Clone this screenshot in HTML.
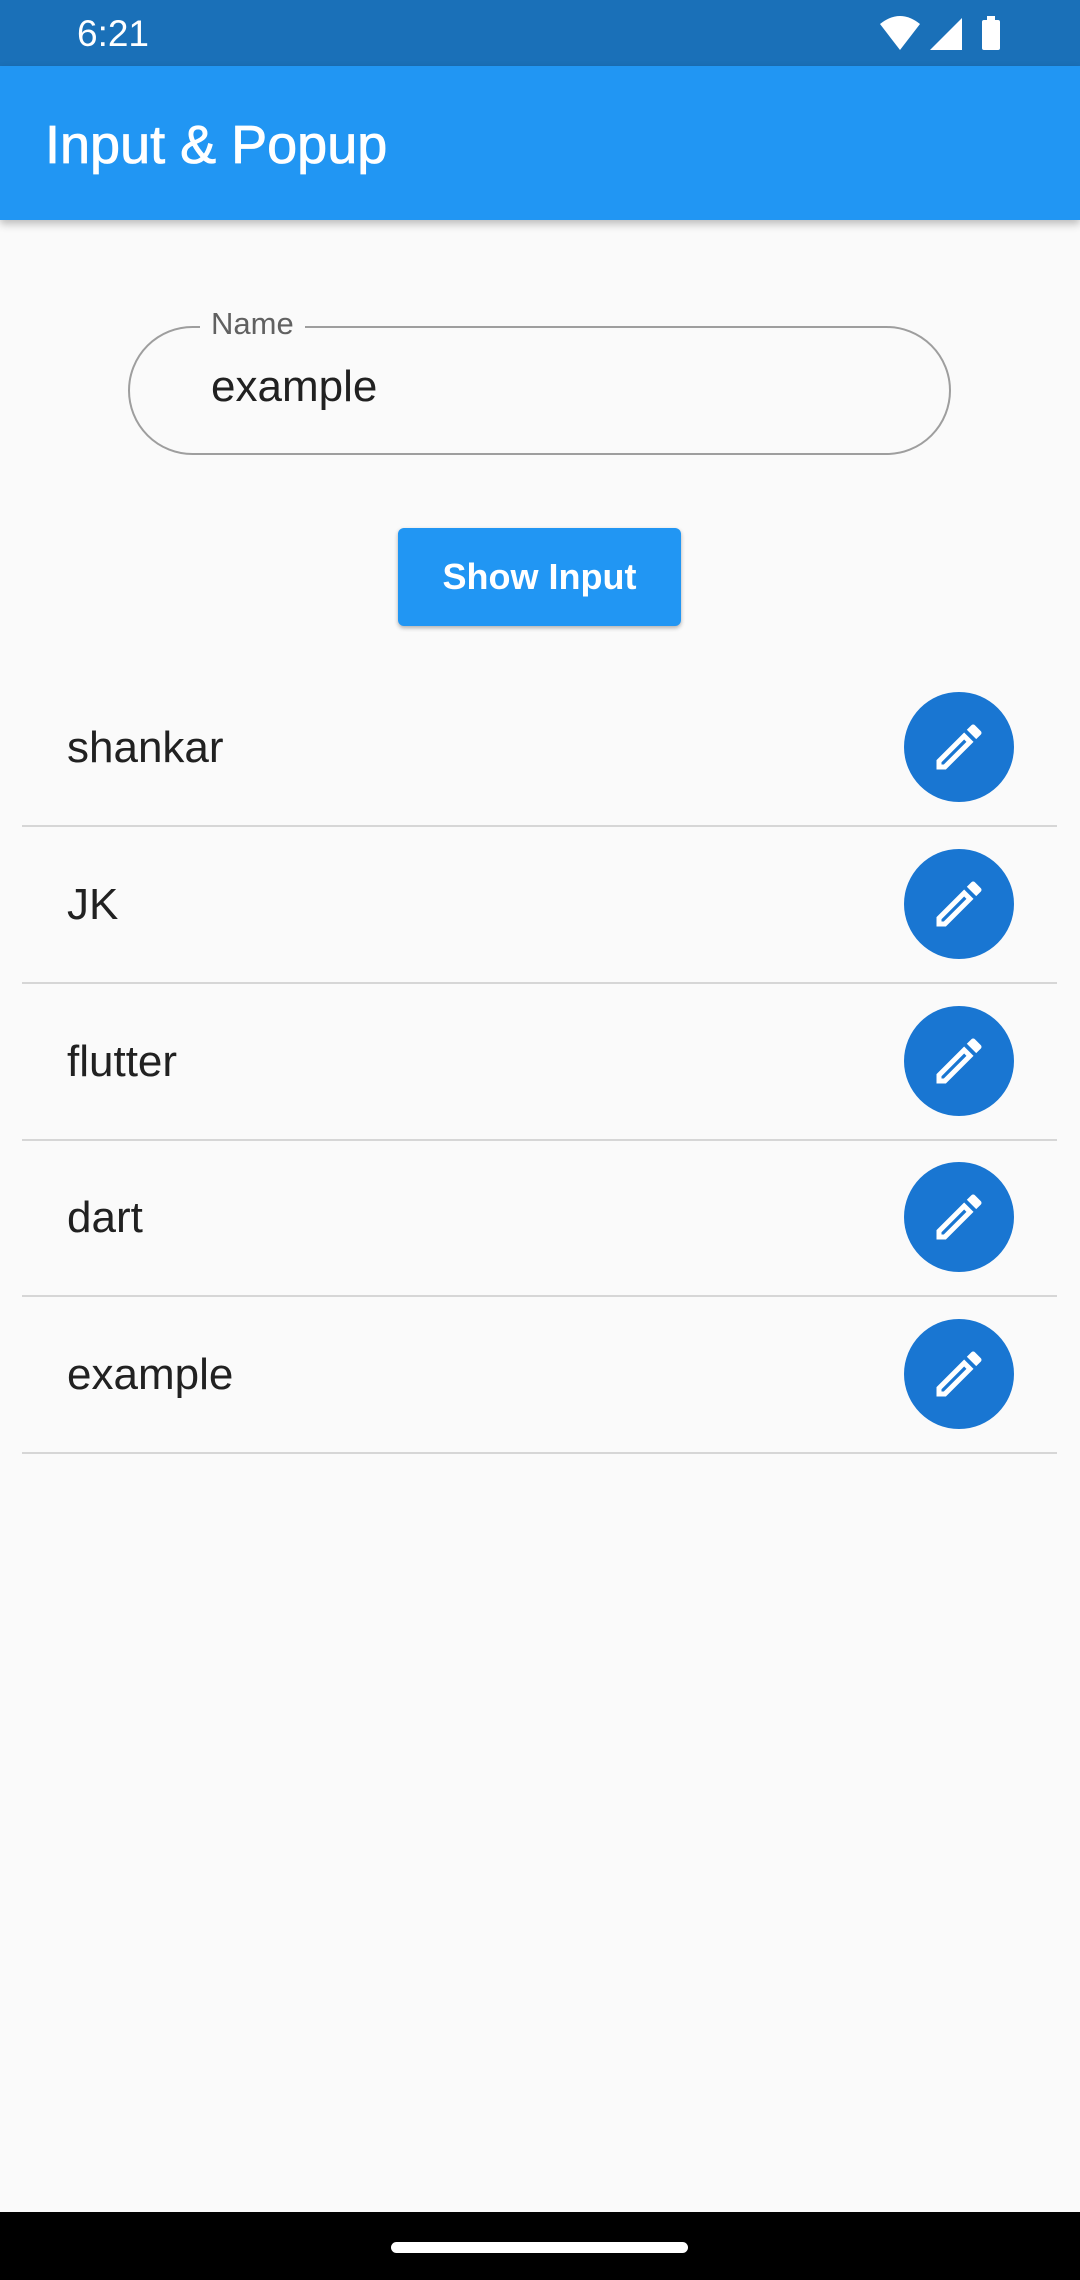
<!DOCTYPE html>
<html><head><meta charset="utf-8">
<style>
*{margin:0;padding:0;box-sizing:border-box}
body{width:1080px;height:2280px;background:#fafafa;font-family:"Liberation Sans",Roboto,sans-serif;position:relative;overflow:hidden}
.status{position:absolute;left:0;top:0;width:1080px;height:66px;background:#1a70b8;color:#fff}
.time{position:absolute;left:77px;top:13px;font-size:37px}
.appbar{position:absolute;left:0;top:66px;width:1080px;height:154px;background:#2196f3;box-shadow:0 4px 8px rgba(0,0,0,.25)}
.title{position:absolute;left:45px;top:48px;font-size:54px;color:#fff;-webkit-text-stroke:0.8px #fff}
.field{position:absolute;left:128px;top:326px;width:823px;height:129px;border:2px solid #9e9e9e;border-radius:65px}
.label{position:absolute;left:200px;top:306px;padding:0 11px;background:#fafafa;font-size:31px;color:#616161}
.val{position:absolute;left:211px;top:362px;font-size:44px;color:#212121}
.btn{position:absolute;left:398px;top:528px;width:283px;height:98px;background:#2196f3;border-radius:6px;color:#fff;font-size:36px;font-weight:bold;text-align:center;line-height:98px;box-shadow:0 2px 4px rgba(0,0,0,.3)}
.row{position:absolute;left:22px;width:1035px;height:157px;border-bottom:2px solid #d6d6d6}
.row span{position:absolute;left:45px;top:50%;transform:translateY(-50%);font-size:44px;color:#212121}
.c{position:absolute;left:882px;top:22px;width:110px;height:110px;border-radius:50%;background:#1976d2}
.c svg{position:absolute;left:25px;top:25px}
.nav{position:absolute;left:0;top:2212px;width:1080px;height:68px;background:#000}
.pill{position:absolute;left:391px;top:30px;width:297px;height:11px;border-radius:6px;background:#fff}
</style></head><body>
<div class="status"><div class="time">6:21</div>
<svg style="position:absolute;left:878px;top:14px" width="130" height="40" viewBox="0 0 130 40">
<path d="M2 10 Q22 -6 42 10 L22 36 Z" fill="#fff"/>
<path d="M52 36 L84 4 L84 36 Z" fill="#fff"/>
<rect x="104" y="6" width="18" height="30" rx="2" fill="#fff"/><rect x="109" y="2" width="8" height="5" fill="#fff"/>
</svg></div>
<div class="appbar"><div class="title">Input &amp; Popup</div></div>
<div class="field"></div>
<div class="label">Name</div>
<div class="val">example</div>
<div class="btn">Show Input</div>
<div class="row" style="top:670px"><span>shankar</span><div class="c"><svg width="60" height="60" viewBox="0 0 24 24"><path fill="#fff" d="M3 17.25V21h3.75L17.81 9.94l-3.75-3.750L3 17.25zM5.92 19H5v-.92l9.06-9.06.92.92L5.92 19zM20.71 5.63l-2.34-2.34a1 1 0 0 0-1.41 0l-1.83 1.83 3.75 3.75 1.83-1.83a1 1 0 0 0 0-1.41z"/></svg></div></div>
<div class="row" style="top:827px"><span>JK</span><div class="c"><svg width="60" height="60" viewBox="0 0 24 24"><path fill="#fff" d="M3 17.25V21h3.75L17.81 9.94l-3.75-3.75L3 17.25zM5.92 19H5v-.92l9.06-9.06.92.92L5.92 19zM20.71 5.63l-2.34-2.34a1 1 0 0 0-1.41 0l-1.83 1.83 3.75 3.75 1.83-1.83a1 1 0 0 0 0-1.41z"/></svg></div></div>
<div class="row" style="top:984px"><span>flutter</span><div class="c"><svg width="60" height="60" viewBox="0 0 24 24"><path fill="#fff" d="M3 17.25V21h3.75L17.81 9.94l-3.75-3.75L3 17.25zM5.92 19H5v-.92l9.06-9.06.92.92L5.92 19zM20.71 5.63l-2.34-2.34a1 1 0 0 0-1.41 0l-1.83 1.83 3.75 3.75 1.83-1.83a1 1 0 0 0 0-1.41z"/></svg></div></div>
<div class="row" style="top:1140px"><span>dart</span><div class="c"><svg width="60" height="60" viewBox="0 0 24 24"><path fill="#fff" d="M3 17.25V21h3.75L17.81 9.94l-3.75-3.75L3 17.25zM5.92 19H5v-.92l9.06-9.06.92.92L5.92 19zM20.71 5.63l-2.34-2.34a1 1 0 0 0-1.41 0l-1.83 1.83 3.75 3.75 1.83-1.83a1 1 0 0 0 0-1.41z"/></svg></div></div>
<div class="row" style="top:1297px"><span>example</span><div class="c"><svg width="60" height="60" viewBox="0 0 24 24"><path fill="#fff" d="M3 17.25V21h3.75L17.81 9.94l-3.75-3.75L3 17.25zM5.92 19H5v-.92l9.06-9.06.92.92L5.92 19zM20.71 5.63l-2.34-2.34a1 1 0 0 0-1.41 0l-1.83 1.83 3.75 3.75 1.83-1.83a1 1 0 0 0 0-1.41z"/></svg></div></div>
<div class="nav"><div class="pill"></div></div>
</body></html>
